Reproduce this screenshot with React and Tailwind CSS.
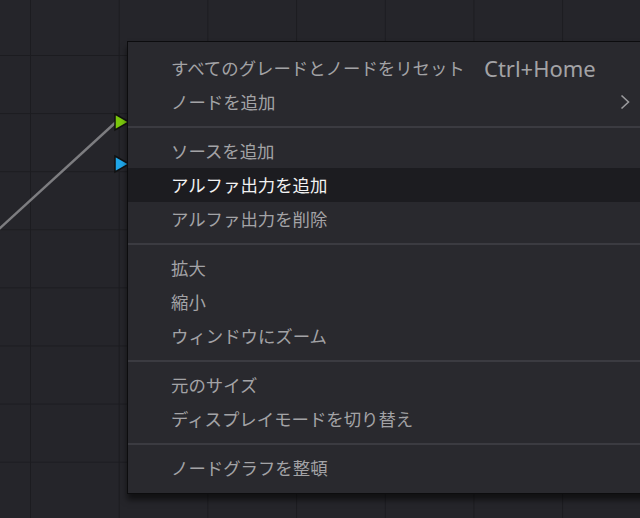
/* ノードグラフ + 右クリックメニュー */
const GROUPS = [
  [
    { label: "すべてのグレードとノードをリセット", key: "Ctrl+Home" },
    { label: "ノードを追加", sub: true },
  ],
  [
    { label: "ソースを追加" },
    { label: "アルファ出力を追加", active: true },
    { label: "アルファ出力を削除" },
  ],
  [{ label: "拡大" }, { label: "縮小" }, { label: "ウィンドウにズーム" }],
  [{ label: "元のサイズ" }, { label: "ディスプレイモードを切り替え" }],
  [{ label: "ノードグラフを整頓" }],
];

const FONT = "font-['Noto_Sans_CJK_JP','Noto_Sans',sans-serif]";

function Item({ it }) {
  return (
    <div
      className={
        "h-[34px] flex items-center pl-[43px] " +
        (it.active ? "bg-[#1c1c20] text-[#f2f2f2]" : "text-[#a3a3a6]")
      }
    >
      <span className="w-[313px] shrink-0 whitespace-nowrap">{it.label}</span>
      {it.key && <span className="whitespace-nowrap text-[22px] font-['Noto_Sans',sans-serif]">{it.key}</span>}
      {it.sub && (
        <svg className="ml-auto mr-[36px]" width="10" height="16" viewBox="0 0 10 16">
          <polyline points="1.5,1.5 8.5,8 1.5,14.5" fill="none" stroke="#9a9a9d" strokeWidth="1.6" />
        </svg>
      )}
    </div>
  );
}

export default function App() {
  return (
    <div
      className={
        "relative w-[640px] h-[518px] overflow-hidden bg-[#25252a] " +
        "bg-[linear-gradient(to_right,#1c1c20_1px,transparent_1px),linear-gradient(to_bottom,#1c1c20_1px,transparent_1px)] " +
        "bg-[size:88.7px_58.1px] bg-[position:30px_55px] " +
        FONT
      }
    >
      {/* 接続線と入力ピン */}
      <svg className="absolute left-0 top-0" width="140" height="240">
        <line x1="-2" y1="230" x2="116" y2="122" stroke="#7d7d80" strokeWidth="2.4" />
        <polygon points="115,114 129,122 115,130" fill="#7ac70c" stroke="#111" strokeWidth="1.5" />
        <polygon points="115,156 129,164 115,172" fill="#1fa6e8" stroke="#111" strokeWidth="1.5" />
      </svg>

      {/* コンテキストメニュー */}
      <div className="absolute left-[127px] top-[41px] w-[540px] pt-[9px] pb-[8px] bg-[#29292e] border border-[#0c0c0e] shadow-[0_6px_6px_rgba(0,0,0,0.55)] text-[17.4px] leading-none">
        {GROUPS.map((g, gi) => (
          <div key={gi}>
            {gi > 0 && (
              <div className="h-[15px] flex items-center">
                <div className="w-full h-[2px] bg-[#3b3b41]" />
              </div>
            )}
            {g.map((it) => (
              <Item key={it.label} it={it} />
            ))}
          </div>
        ))}
      </div>
    </div>
  );
}
